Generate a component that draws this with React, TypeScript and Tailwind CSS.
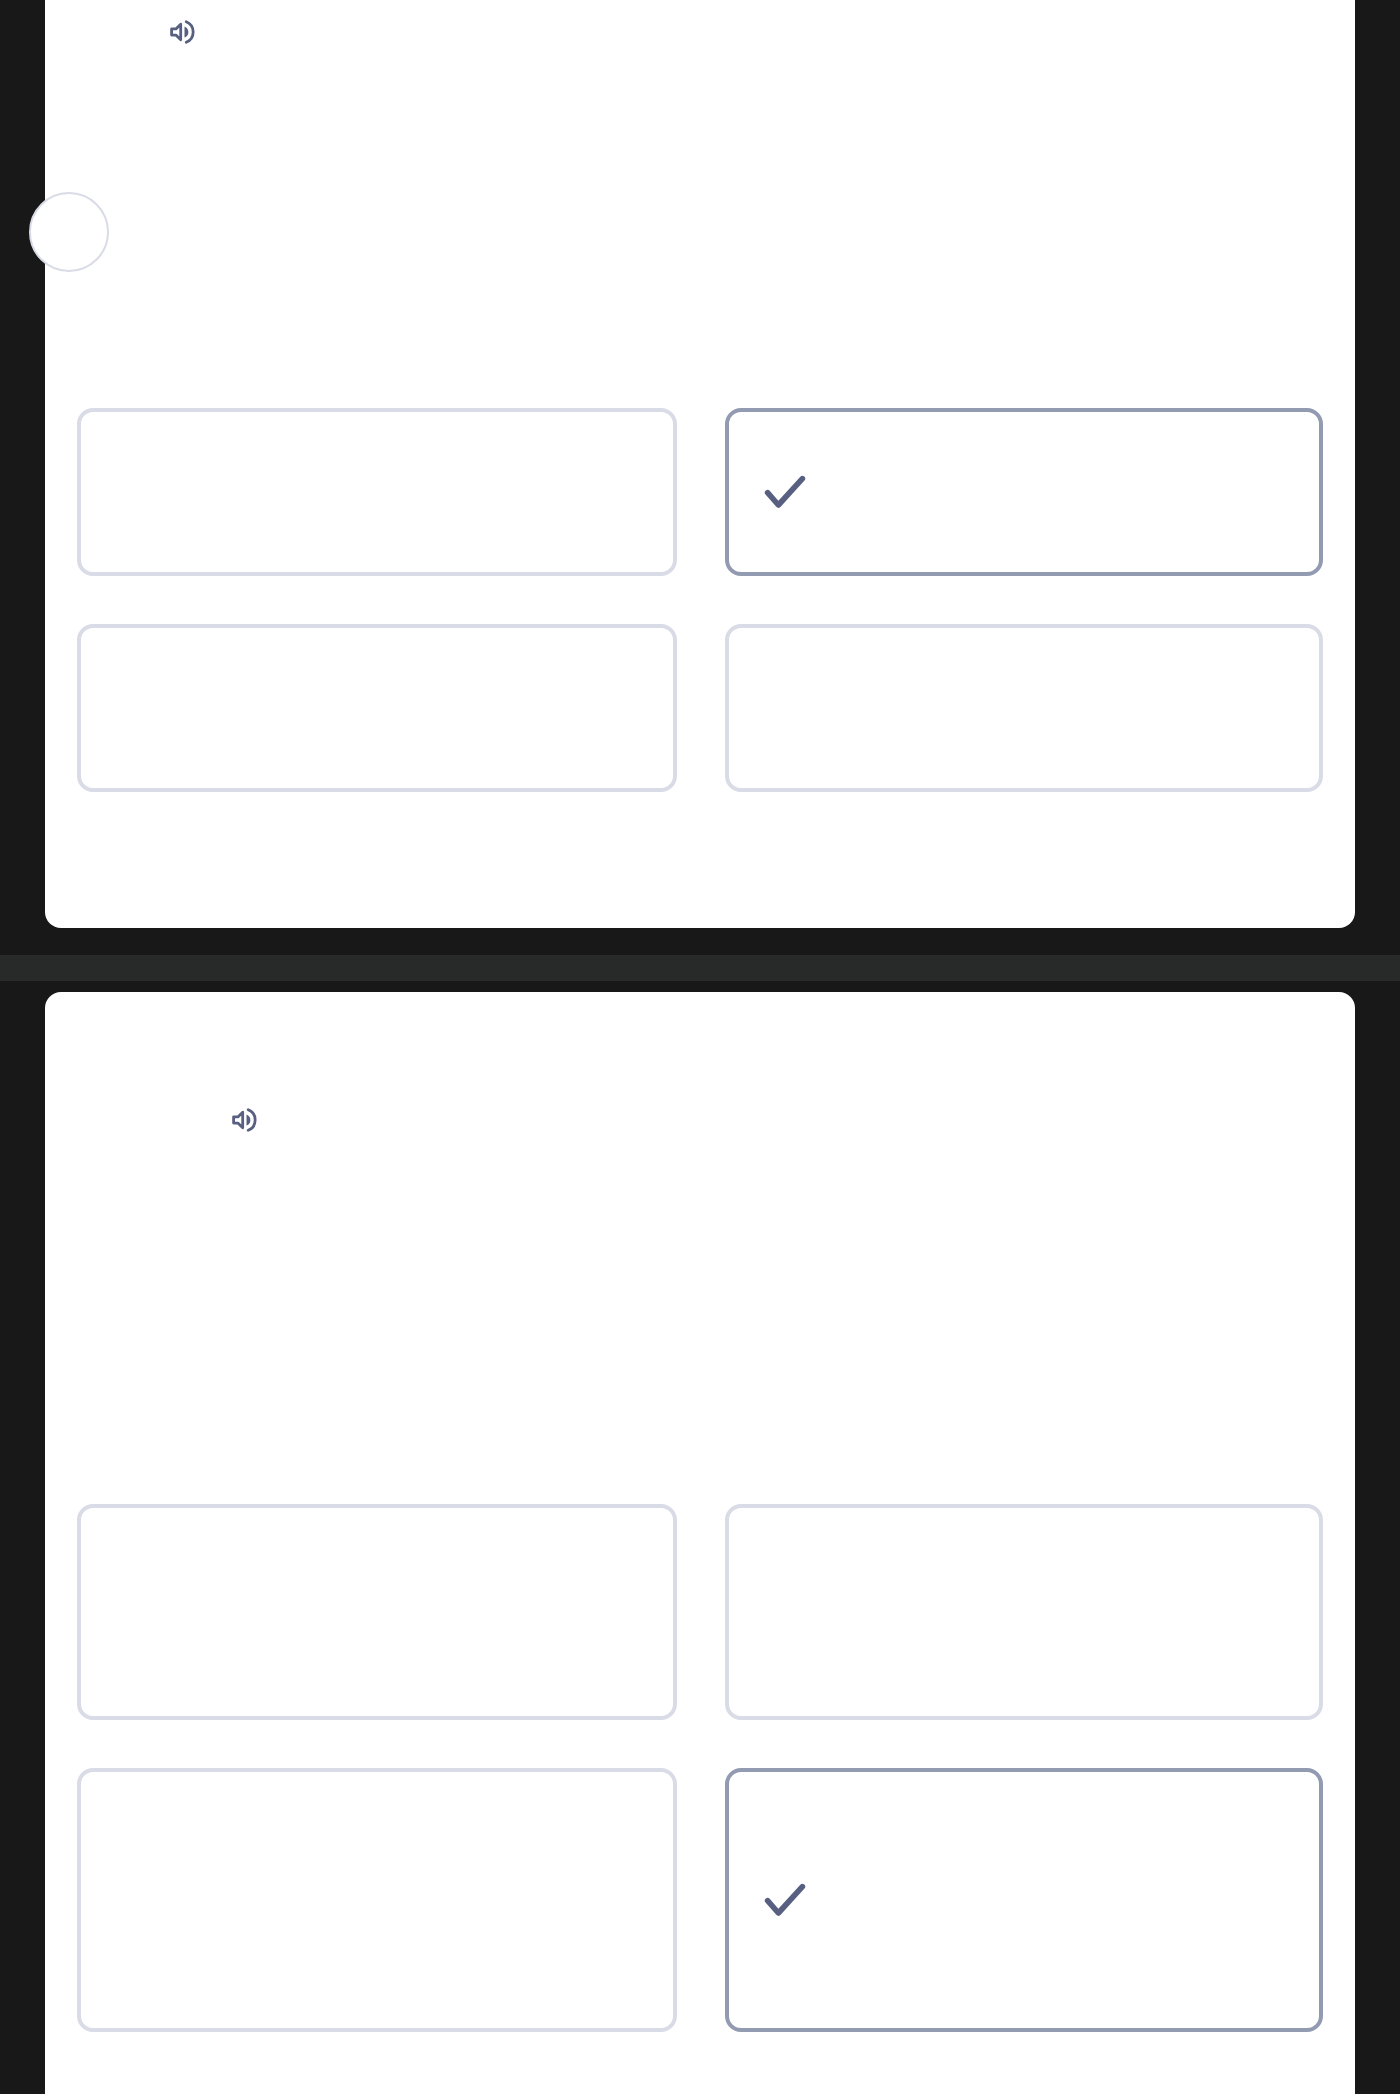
import clsx from "clsx";

type Question = {
  id: string;
  rows: string;
  selected: number;
};

const first: Question = { id: "q1", rows: "grid-rows-[168px_168px]", selected: 1 };
const second: Question = { id: "q2", rows: "grid-rows-[216px_264px]", selected: 3 };

function SpeakerIcon() {
  return (
    <svg
      viewBox="0 0 32 32"
      className="w-8 h-8"
      fill="none"
      stroke="currentColor"
      strokeWidth="2.8"
      strokeLinecap="round"
      strokeLinejoin="round"
    >
      <path d="M5.6 12.9v6.2h4.3l4.8 4.7V8.2l-4.8 4.7z" />
      <path d="M18.5 10.4a6 6 0 0 1 0 11.2z" fill="currentColor" stroke="none" />
      <path d="M20.2 5.7a11.1 11.1 0 0 1 0 20.6" />
    </svg>
  );
}

function CheckIcon() {
  return (
    <svg
      viewBox="0 0 48 48"
      className="w-12 h-12"
      fill="none"
      stroke="currentColor"
      strokeWidth="5.6"
      strokeLinecap="round"
      strokeLinejoin="round"
    >
      <path d="M6.6 24.6 17.4 37 41.4 10.6" />
    </svg>
  );
}

function AudioButton() {
  return (
    <button className="block text-[#586082]" aria-label="Play audio">
      <SpeakerIcon />
    </button>
  );
}

function Options({ question }: { question: Question }) {
  return (
    <div className={clsx("grid grid-cols-[600px_598px] gap-12 mx-8", question.rows)}>
      {[0, 1, 2, 3].map((i) => (
        <button
          key={`${question.id}-${i}`}
          className={clsx(
            "flex items-center rounded-2xl border-4 px-8 text-[#586082]",
            i === question.selected ? "border-[#939bb2]" : "border-[#d9dce6]"
          )}
          aria-pressed={i === question.selected}
          aria-label={`Option ${i + 1}`}
        >
          {i === question.selected && <CheckIcon />}
        </button>
      ))}
    </div>
  );
}

export default function App() {
  return (
    <main className="flex flex-col w-[1400px] h-[2094px] overflow-hidden bg-[#181818]">
      <section className="relative flex flex-col h-[928px] w-[1310px] ml-[45px] shrink-0 rounded-b-2xl bg-white">
        <div className="pt-4 pl-[121px] h-[408px]">
          <AudioButton />
        </div>
        <Options question={first} />

        {/* Floating round button on the card edge */}
        <button
          className="absolute top-48 -left-4 w-20 h-20 rounded-full border-2 border-[#d9dce6] bg-white"
          aria-label="Menu"
        />
      </section>

      <div className="h-[26px] mt-[27px] mb-[11px] shrink-0 bg-[#282a2a]" />

      <section className="flex flex-col h-[1102px] w-[1310px] ml-[45px] shrink-0 rounded-t-2xl bg-white">
        <div className="pt-28 pl-[183px] h-[512px]">
          <AudioButton />
        </div>
        <Options question={second} />
      </section>
    </main>
  );
}
